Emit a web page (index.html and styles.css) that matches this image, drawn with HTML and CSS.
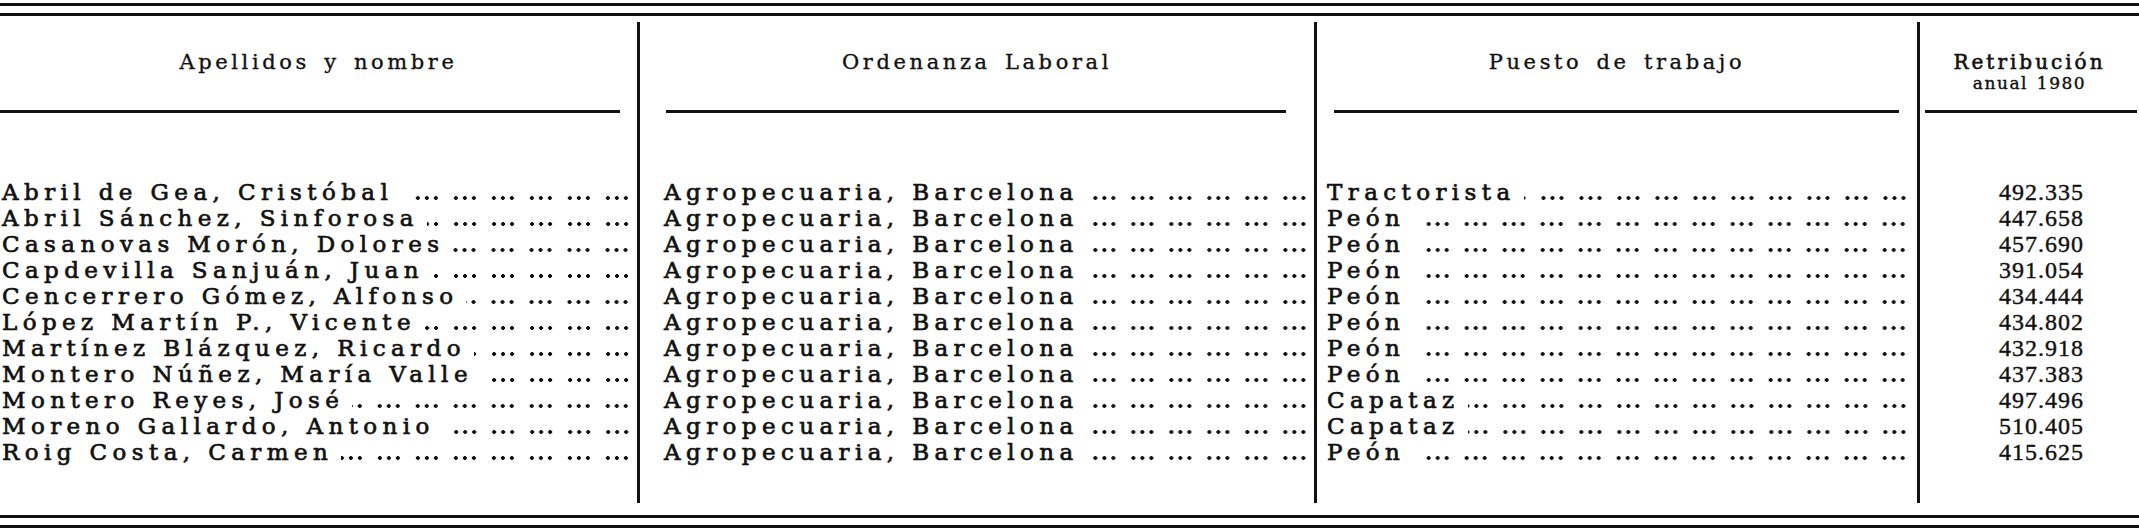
FILE: index.html
```html
<!DOCTYPE html>
<html lang="es">
<head>
<meta charset="utf-8">
<title>Relación de trabajadores</title>
<link rel="stylesheet" href="styles.css">
</head>
<body>
<div class="page">
  <div class="rules top"><div class="rule"></div><div class="rule"></div></div>
  <div class="table">
    <div class="col c1">
      <div class="head"><span>Apellidos y nombre</span></div>
      <div class="hrule"></div>
      <div class="cells">
        <div class="cell"><span class="txt">Abril de Gea, Cristóbal</span><span class="dots"></span></div>
        <div class="cell"><span class="txt">Abril Sánchez, Sinforosa</span><span class="dots"></span></div>
        <div class="cell"><span class="txt">Casanovas Morón, Dolores</span><span class="dots"></span></div>
        <div class="cell"><span class="txt">Capdevilla Sanjuán, Juan</span><span class="dots"></span></div>
        <div class="cell"><span class="txt">Cencerrero Gómez, Alfonso</span><span class="dots"></span></div>
        <div class="cell"><span class="txt">López Martín P., Vicente</span><span class="dots"></span></div>
        <div class="cell"><span class="txt">Martínez Blázquez, Ricardo</span><span class="dots"></span></div>
        <div class="cell"><span class="txt">Montero Núñez, María Valle</span><span class="dots"></span></div>
        <div class="cell"><span class="txt">Montero Reyes, José</span><span class="dots"></span></div>
        <div class="cell"><span class="txt">Moreno Gallardo, Antonio</span><span class="dots"></span></div>
        <div class="cell"><span class="txt">Roig Costa, Carmen</span><span class="dots"></span></div>
      </div>
    </div>
    <div class="col c2">
      <div class="head"><span>Ordenanza Laboral</span></div>
      <div class="hrule"></div>
      <div class="cells">
        <div class="cell"><span class="txt">Agropecuaria, Barcelona</span><span class="dots"></span></div>
        <div class="cell"><span class="txt">Agropecuaria, Barcelona</span><span class="dots"></span></div>
        <div class="cell"><span class="txt">Agropecuaria, Barcelona</span><span class="dots"></span></div>
        <div class="cell"><span class="txt">Agropecuaria, Barcelona</span><span class="dots"></span></div>
        <div class="cell"><span class="txt">Agropecuaria, Barcelona</span><span class="dots"></span></div>
        <div class="cell"><span class="txt">Agropecuaria, Barcelona</span><span class="dots"></span></div>
        <div class="cell"><span class="txt">Agropecuaria, Barcelona</span><span class="dots"></span></div>
        <div class="cell"><span class="txt">Agropecuaria, Barcelona</span><span class="dots"></span></div>
        <div class="cell"><span class="txt">Agropecuaria, Barcelona</span><span class="dots"></span></div>
        <div class="cell"><span class="txt">Agropecuaria, Barcelona</span><span class="dots"></span></div>
        <div class="cell"><span class="txt">Agropecuaria, Barcelona</span><span class="dots"></span></div>
      </div>
    </div>
    <div class="col c3">
      <div class="head"><span>Puesto de trabajo</span></div>
      <div class="hrule"></div>
      <div class="cells">
        <div class="cell"><span class="txt">Tractorista</span><span class="dots"></span></div>
        <div class="cell"><span class="txt">Peón</span><span class="dots"></span></div>
        <div class="cell"><span class="txt">Peón</span><span class="dots"></span></div>
        <div class="cell"><span class="txt">Peón</span><span class="dots"></span></div>
        <div class="cell"><span class="txt">Peón</span><span class="dots"></span></div>
        <div class="cell"><span class="txt">Peón</span><span class="dots"></span></div>
        <div class="cell"><span class="txt">Peón</span><span class="dots"></span></div>
        <div class="cell"><span class="txt">Peón</span><span class="dots"></span></div>
        <div class="cell"><span class="txt">Capataz</span><span class="dots"></span></div>
        <div class="cell"><span class="txt">Capataz</span><span class="dots"></span></div>
        <div class="cell"><span class="txt">Peón</span><span class="dots"></span></div>
      </div>
    </div>
    <div class="col c4">
      <div class="head"><span class="h4a">Retribución</span><span class="h4b">anual 1980</span></div>
      <div class="hrule"></div>
      <div class="cells">
        <div class="cell num">492.335</div>
        <div class="cell num">447.658</div>
        <div class="cell num">457.690</div>
        <div class="cell num">391.054</div>
        <div class="cell num">434.444</div>
        <div class="cell num">434.802</div>
        <div class="cell num">432.918</div>
        <div class="cell num">437.383</div>
        <div class="cell num">497.496</div>
        <div class="cell num">510.405</div>
        <div class="cell num">415.625</div>
      </div>
    </div>
  </div>
  <div class="rules bottom"><div class="rule"></div><div class="rule"></div></div>
</div>
</body>
</html>
```
FILE: styles.css
```css
html, body {
  margin: 0;
  padding: 0;
  background: #ffffff;
}

.page {
  width: 2139px;
  height: 531px;
  padding-top: 3px;
  box-sizing: border-box;
  color: #111111;
  font-family: "DejaVu Serif", "Liberation Serif", serif;
}

.rules .rule {
  height: 3px;
  background: #111111;
}

.rules .rule + .rule {
  margin-top: 7px;
}

.table {
  display: grid;
  grid-template-columns: 637px 677px 603px 222px;
  margin-top: 6px;
}

.col {
  display: flex;
  flex-direction: column;
  height: 481px;
  box-sizing: border-box;
}

.col + .col {
  border-left: 3px solid #111111;
}

.head {
  height: 88px;
  display: flex;
  flex-direction: column;
  align-items: center;
  justify-content: center;
  font-size: 21px;
  letter-spacing: 3.6px;
  word-spacing: 4px;
  padding-bottom: 8px;
  box-sizing: border-box;
  -webkit-text-stroke: 0.35px #111111;
}

.c4 .head {
  padding-top: 14px;
  padding-bottom: 0;
  letter-spacing: 3px;
  word-spacing: 2px;
}

.h4a {
  font-size: 20px;
  line-height: 21px;
  -webkit-text-stroke: 0.6px #111111;
}

.h4b {
  font-size: 17px;
  line-height: 21px;
  letter-spacing: 1.5px;
  -webkit-text-stroke: 0.4px #111111;
}

.hrule {
  height: 3px;
  background: #111111;
}

.c1 .hrule { margin: 0 17px 0 0; }
.c2 .hrule { margin: 0 28px 0 26px; }
.c3 .hrule { margin: 0 18px 0 17px; }
.c4 .hrule { margin: 0 2px 0 5px; }

.cells {
  padding-top: 66px;
  display: flex;
  flex-direction: column;
}

.c1 .cells { padding-left: 2px; padding-right: 8px; }
.c2 .cells { padding-left: 24px; padding-right: 8px; }
.c3 .cells { padding-left: 10px; padding-right: 11px; }

.cell {
  display: flex;
  height: 26px;
  line-height: 26px;
  font-size: 23px;
  white-space: nowrap;
}

.txt {
  flex: none;
  letter-spacing: 5.4px;
  -webkit-text-stroke: 0.7px #111111;
}

.dots {
  flex: 1;
  min-width: 0;
  margin-left: 8px;
  background-image:
    radial-gradient(circle at 17px 19px, #111111 1.6px, transparent 2.2px),
    radial-gradient(circle at 26px 19px, #111111 1.6px, transparent 2.2px),
    radial-gradient(circle at 35px 19px, #111111 1.6px, transparent 2.2px);
  background-size: 38px 26px;
  background-repeat: repeat-x;
  background-position: right 0 top 0;
}

.num {
  justify-content: center;
  padding-left: 24px;
  font-family: "Liberation Serif", "DejaVu Serif", serif;
  font-size: 24px;
  letter-spacing: 1px;
  -webkit-text-stroke: 0.4px #111111;
}

.bottom {
  margin-top: 12px;
}
```
